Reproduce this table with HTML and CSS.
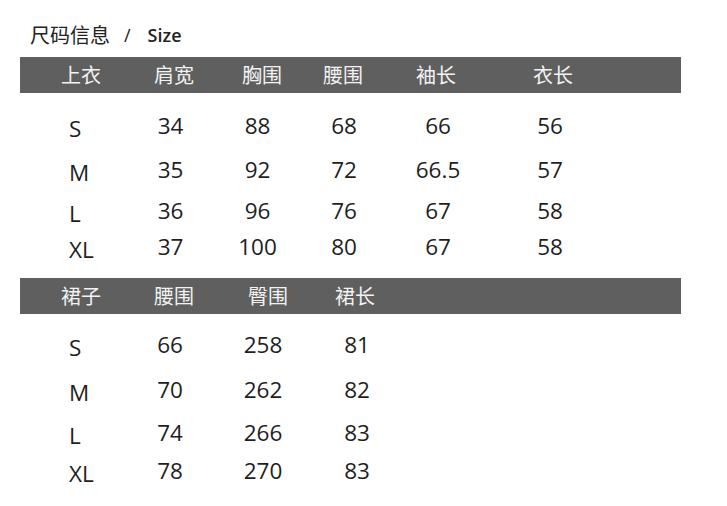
FILE: index.html
```html
<!DOCTYPE html>
<html lang="zh">
<head>
<meta charset="utf-8">
<title>尺码信息 / Size</title>
<link rel="stylesheet" href="styles.css">
</head>
<body>
<div class="page">
  <h1 class="title"><span class="cn">尺码信息</span><span class="slash">/</span><span class="en">Size</span></h1>

  <section class="table top">
    <div class="head">
      <span>上衣</span><span>肩宽</span><span>胸围</span><span>腰围</span><span>袖长</span><span>衣长</span>
    </div>
    <div class="body">
      <div class="row r1"><span class="sz">S</span><span>34</span><span>88</span><span>68</span><span>66</span><span>56</span></div>
      <div class="row r2"><span class="sz">M</span><span>35</span><span>92</span><span>72</span><span>66.5</span><span>57</span></div>
      <div class="row r3"><span class="sz">L</span><span>36</span><span>96</span><span>76</span><span>67</span><span>58</span></div>
      <div class="row r4"><span class="sz">XL</span><span>37</span><span>100</span><span>80</span><span>67</span><span>58</span></div>
    </div>
  </section>

  <section class="table bottom">
    <div class="head">
      <span>裙子</span><span>腰围</span><span>臀围</span><span>裙长</span>
    </div>
    <div class="body">
      <div class="row r1"><span class="sz">S</span><span>66</span><span>258</span><span>81</span></div>
      <div class="row r2"><span class="sz">M</span><span>70</span><span>262</span><span>82</span></div>
      <div class="row r3"><span class="sz">L</span><span>74</span><span>266</span><span>83</span></div>
      <div class="row r4"><span class="sz">XL</span><span>78</span><span>270</span><span>83</span></div>
    </div>
  </section>
</div>
</body>
</html>
```
FILE: styles.css
```css
html, body {
  margin: 0;
  padding: 0;
  background: #ffffff;
}

.page {
  width: 727px;
  height: 506px;
  overflow: hidden;
  font-family: "Open Sans", "Noto Sans CJK SC", sans-serif;
  color: #1e1e1e;
}

.title {
  margin: 22px 0 0 30px;
  height: 26px;
  line-height: 26px;
  font-weight: normal;
  display: flex;
  align-items: center;
  color: #222222;
}

.title .cn {
  font-family: "Noto Sans CJK SC", sans-serif;
  font-size: 20px;
}

.title .slash {
  font-family: "Open Sans", sans-serif;
  font-size: 18px;
  margin: 0 17px 0 14px;
}

.title .en {
  font-family: "Open Sans", sans-serif;
  font-size: 18px;
  font-weight: 600;
}

.table {
  width: 661px;
  margin-left: 20px;
}

.table.top {
  margin-top: 9px;
}

.table.bottom {
  margin-top: 19px;
}

.head {
  height: 36px;
  background: #5f5f5f;
  color: #f2f2f2;
  display: grid;
  align-items: center;
  padding-left: 41px;
  font-family: "Noto Sans CJK SC", sans-serif;
  font-size: 20px;
  line-height: 1;
}

.top .head {
  grid-template-columns: 93px 88px 81px 93px 117px auto;
}

.bottom .head {
  grid-template-columns: 93px 94px 87px auto;
}

.body {
  font-size: 22.5px;
}

.top .body {
  padding-top: 10px;
}

.bottom .body {
  padding-top: 7px;
}

.row {
  display: grid;
  align-items: center;
  line-height: 1.2;
}

.row span {
  text-align: center;
}

.row .sz {
  text-align: left;
  padding-left: 49px;
  padding-top: 7px;
}

.top .row {
  grid-template-columns: 107px 87px 87px 86px 102px 122px;
}

.bottom .row {
  grid-template-columns: 107px 86px 100px 88px;
}

.top .r1 { height: 44px; }
.top .r2 { height: 44px; }
.top .r3 { height: 38px; }
.top .r4 { height: 30px; }

.bottom .r1 { height: 46px; }
.bottom .r2 { height: 44px; }
.bottom .r3 { height: 42px; }
.bottom .r4 { height: 32px; }
```
